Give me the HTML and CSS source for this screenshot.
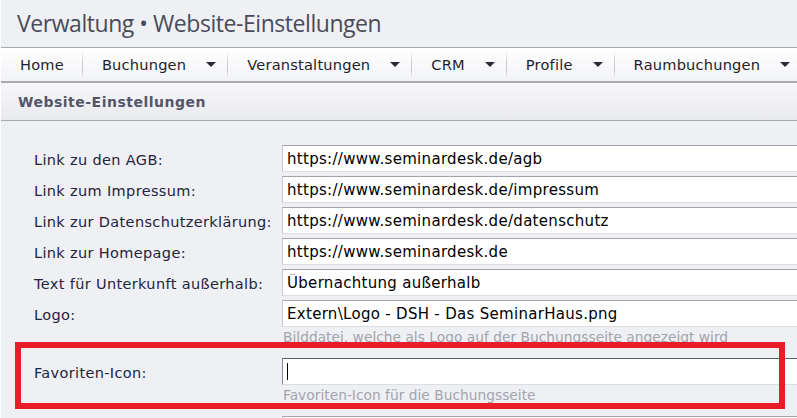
FILE: index.html
```html
<!DOCTYPE html>
<html lang="de">
<head>
<meta charset="utf-8">
<title>Verwaltung • Website-Einstellungen</title>
<link rel="stylesheet" href="styles.css">
</head>
<body>
<div class="page">
  <header class="titlebar">
    <h1 class="title">Verwaltung • Website-Einstellungen</h1>
  </header>
  <nav class="menu">
    <div class="item">Home</div>
    <div class="item dd">Buchungen<span class="caret"></span></div>
    <div class="item dd">Veranstaltungen<span class="caret"></span></div>
    <div class="item dd">CRM<span class="caret"></span></div>
    <div class="item dd">Profile<span class="caret"></span></div>
    <div class="item dd">Raumbuchungen<span class="caret"></span></div>
  </nav>
  <div class="section-head">Website-Einstellungen</div>
  <form class="form">
    <div class="row">
      <label class="label">Link zu den AGB:</label>
      <div class="field"><input class="input" type="text" value="https://www.seminardesk.de/agb"></div>
    </div>
    <div class="row">
      <label class="label">Link zum Impressum:</label>
      <div class="field"><input class="input" type="text" value="https://www.seminardesk.de/impressum"></div>
    </div>
    <div class="row">
      <label class="label">Link zur Datenschutzerklärung:</label>
      <div class="field"><input class="input" type="text" value="https://www.seminardesk.de/datenschutz"></div>
    </div>
    <div class="row">
      <label class="label">Link zur Homepage:</label>
      <div class="field"><input class="input" type="text" value="https://www.seminardesk.de"></div>
    </div>
    <div class="row">
      <label class="label">Text für Unterkunft außerhalb:</label>
      <div class="field"><input class="input" type="text" value="Übernachtung außerhalb"></div>
    </div>
    <div class="row">
      <label class="label">Logo:</label>
      <div class="field">
        <input class="input" type="text" value="Extern\Logo - DSH - Das SeminarHaus.png">
        <div class="hint">Bilddatei, welche als Logo auf der Buchungsseite angezeigt wird</div>
      </div>
    </div>
    <div class="row highlighted">
      <label class="label">Favoriten-Icon:</label>
      <div class="field">
        <div class="input focused"><span class="cursor"></span></div>
        <div class="hint">Favoriten-Icon für die Buchungsseite</div>
      </div>
      <div class="redbox"></div>
    </div>
    <div class="row">
      <label class="label"></label>
      <div class="field"><input class="input" type="text" value=""></div>
    </div>
  </form>
</div>
</body>
</html>
```

FILE: styles.css
```css
html, body {
  margin: 0;
  padding: 0;
  background: #ffffff;
  overflow: hidden;
}
.page {
  margin-left: 1px;
  width: 796px;
  height: 418px;
  background: #eff0f4;
  overflow: hidden;
  font-family: "DejaVu Sans", Verdana, sans-serif;
}
.titlebar {
  height: 47px;
  display: flex;
  align-items: center;
  padding-left: 16px;
  border-bottom: 1px solid #a9aab2;
}
.title {
  margin: 0 0 2px 0;
  font-family: "Open Sans", "Noto Sans", sans-serif;
  font-weight: 400;
  font-size: 23px;
  color: #4a4b5a;
  letter-spacing: -0.45px;
}
.menu {
  display: flex;
  height: 33px;
  align-items: center;
  background: linear-gradient(#ffffff, #f2f3f6);
  border-bottom: 2px solid #a9aab2;
  white-space: nowrap;
}
.item {
  display: flex;
  align-items: center;
  height: 100%;
  padding: 0 19px 0 19px;
  font-size: 14.6px;
  letter-spacing: 0.2px;
  color: #1e1e2c;
  position: relative;
}
.item::after {
  content: "";
  position: absolute;
  right: 0;
  top: 4px;
  bottom: 3px;
  width: 1px;
  background: linear-gradient(#f4f4f6, #c9cad0 40%, #c9cad0 70%, #f0f0f2);
}
.item.dd {
  padding-right: 12px;
}
.caret {
  margin-left: 20px;
  width: 0;
  height: 0;
  border-left: 5px solid transparent;
  border-right: 5px solid transparent;
  border-top: 5px solid #2b2b36;
}
.section-head {
  height: 37px;
  display: flex;
  align-items: center;
  padding-left: 17px;
  font-weight: bold;
  font-size: 14px;
  letter-spacing: 0.5px;
  color: #54556a;
  background: linear-gradient(#f7f7f9, #e9eaee);
  border-bottom: 1px solid #a9aab2;
}
.form {
  padding: 24px 0 0 33px;
  display: flex;
  flex-direction: column;
  gap: 4px;
}
.row {
  display: flex;
  align-items: flex-start;
  position: relative;
}
.label {
  width: 248px;
  flex: none;
  height: 27px;
  padding-top: 2px;
  box-sizing: border-box;
  display: flex;
  align-items: center;
  font-size: 14.5px;
  letter-spacing: 0.35px;
  color: #24243c;
  white-space: nowrap;
}
.field {
  flex: none;
  width: 620px;
}
.input {
  display: block;
  box-sizing: border-box;
  width: 620px;
  height: 27px;
  margin: 0;
  padding: 0 4px;
  font-family: "DejaVu Sans", Verdana, sans-serif;
  font-size: 15px;
  letter-spacing: 0.3px;
  color: #000;
  background: #fff;
  border: 1px solid #c9cad0;
  border-top-color: #a3a4ac;
  border-bottom-color: #dcdde2;
  border-radius: 0;
  outline: none;
}
.input.focused {
  border-top-color: #5c5d66;
  border-left-color: #8a8b94;
  display: flex;
  align-items: center;
}
.cursor {
  width: 1px;
  height: 17px;
  background: #000;
}
.hint {
  height: 16px;
  margin: 2px 0 9px 1px;
  font-size: 13.8px;
  line-height: 16px;
  color: #a3a4ad;
  white-space: nowrap;
}
.redbox {
  position: absolute;
  left: -19px;
  top: -16px;
  width: 770px;
  height: 67px;
  box-sizing: border-box;
  border: 6px solid #e91d27;
  pointer-events: none;
}
```
